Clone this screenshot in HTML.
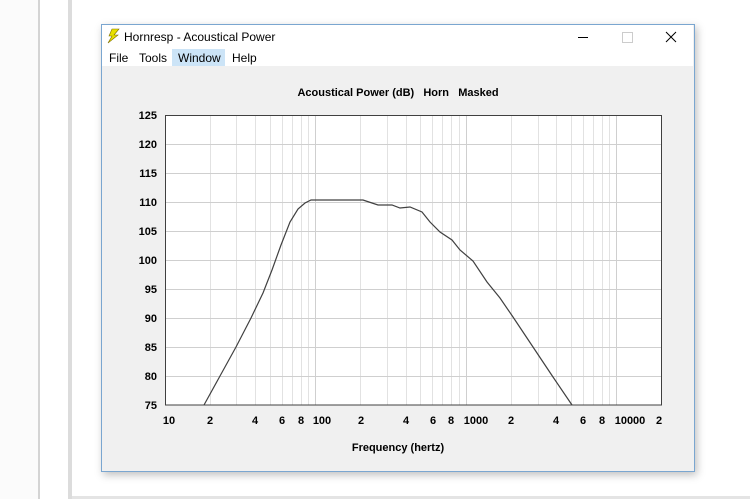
<!DOCTYPE html>
<html><head><meta charset="utf-8"><style>
html,body{margin:0;padding:0;background:#fff;width:750px;height:499px;overflow:hidden;font-family:"Liberation Sans",sans-serif;position:relative}
.a{position:absolute}
</style></head><body>
<div class="a" style="left:0;top:0;width:38px;height:499px;background:#fbfbfb"></div>
<div class="a" style="left:38px;top:0;width:2px;height:499px;background:#d4d4d4"></div>
<div class="a" style="left:68px;top:0;width:4px;height:499px;background:#dcdcdc"></div>
<div class="a" style="left:72px;top:496px;width:678px;height:3px;background:#e4e4e4"></div>
<div class="a" style="left:101px;top:24px;width:592px;height:446px;background:#f0f0f0;border:1px solid #7aa6d0;box-shadow:2px 3px 8px rgba(0,0,0,.25)"></div>
<div class="a" style="left:102px;top:25px;width:591px;height:41px;background:#fff"></div>
<svg class="a" style="left:106px;top:28px" width="14" height="16"><path d="M6 1 L13 1 L8 7 L12 7 L2 15 L6 8 L3 8 Z" fill="#e8e000" stroke="#807000" stroke-width="0.6"/></svg>
<div class="a" style="left:124px;top:30px;font-size:12px;color:#000">Hornresp - Acoustical Power</div>
<div class="a" style="left:578px;top:37px;width:10px;height:1px;background:#000"></div>
<div class="a" style="left:622px;top:32px;width:9px;height:9px;border:1px solid #ccc"></div>
<svg class="a" style="left:665px;top:31px" width="12" height="12"><path d="M1 1L11 11M11 1L1 11" stroke="#000" stroke-width="1"/></svg>
<div class="a" style="left:172px;top:49px;width:53px;height:17px;background:#cce4f7"></div>
<div class="a" style="left:109px;top:51px;font-size:12px;word-spacing:0">File</div>
<div class="a" style="left:139px;top:51px;font-size:12px">Tools</div>
<div class="a" style="left:178px;top:51px;font-size:12px">Window</div>
<div class="a" style="left:232px;top:51px;font-size:12px">Help</div>
<svg class="a" style="left:0;top:0" width="750" height="499" font-family="Liberation Sans,sans-serif" font-weight="bold" font-size="11">
<rect x="165" y="115" width="497" height="290" fill="#fff"/>
<g stroke="#e2e2e2" stroke-width="1">
<path d="M210.5 115V405M236.5 115V405M255.5 115V405M270.5 115V405M282.5 115V405M292.5 115V405M301.5 115V405M308.5 115V405M360.5 115V405M387.5 115V405M406.5 115V405M420.5 115V405M432.5 115V405M442.5 115V405M451.5 115V405M459.5 115V405M511.5 115V405M538.5 115V405M556.5 115V405M571.5 115V405M583.5 115V405M593.5 115V405M602.5 115V405M609.5 115V405"/>
</g>
<g stroke="#cfcfcf" stroke-width="1">
<path d="M315.5 115V405M466.5 115V405M616.5 115V405"/>
<path d="M165 144.5H662M165 173.5H662M165 202.5H662M165 231.5H662M165 260.5H662M165 289.5H662M165 318.5H662M165 347.5H662M165 376.5H662"/>
</g>
<rect x="165.5" y="115.5" width="496" height="289.5" fill="none" stroke="#404040" stroke-width="1"/>
<polyline fill="none" stroke="#404040" stroke-width="1.2" points="204,405 220,376 236,347 251,318 263,293 272,270 281,245 290,222 298,209 305,203 311,200 363,200 372,203 378,205 392,205 400,208 410,207 422,212 430,222 440,232 452,240 460,250 473,261 487,282 500,298 513,317 533,347 553,377 572,405"/>
<text x="398" y="96" text-anchor="middle">Acoustical Power (dB)&#160;&#160;&#160;Horn&#160;&#160;&#160;Masked</text>
<g text-anchor="end">
<text x="157" y="119">125</text><text x="157" y="148">120</text><text x="157" y="177">115</text><text x="157" y="206">110</text><text x="157" y="235">105</text><text x="157" y="264">100</text><text x="157" y="293">95</text><text x="157" y="322">90</text><text x="157" y="351">85</text><text x="157" y="380">80</text><text x="157" y="409">75</text>
</g>
<g text-anchor="middle">
<text x="169" y="424">10</text><text x="210" y="424">2</text><text x="255" y="424">4</text><text x="282" y="424">6</text><text x="301" y="424">8</text><text x="322" y="424">100</text><text x="361" y="424">2</text><text x="406" y="424">4</text><text x="433" y="424">6</text><text x="451" y="424">8</text><text x="476" y="424">1000</text><text x="511" y="424">2</text><text x="556" y="424">4</text><text x="583" y="424">6</text><text x="602" y="424">8</text><text x="630" y="424">10000</text><text x="659" y="424">2</text>
<text x="398" y="451">Frequency (hertz)</text>
</g>
</svg>
</body></html>
